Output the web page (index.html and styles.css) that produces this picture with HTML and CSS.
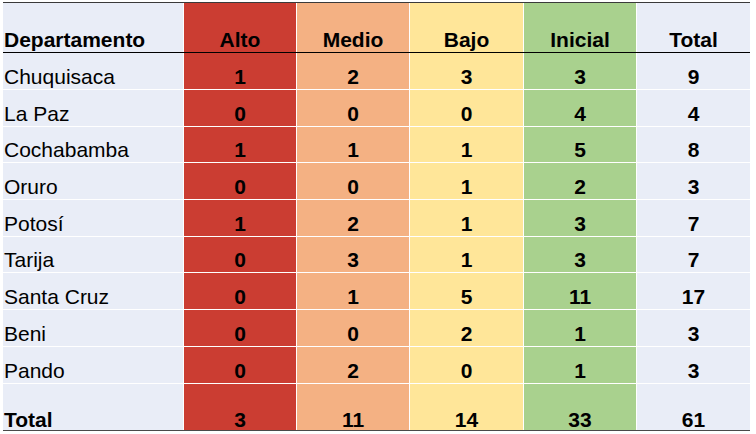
FILE: index.html
```html
<!DOCTYPE html>
<html lang="es">
<head>
<meta charset="utf-8">
<title>Departamentos</title>
<link rel="stylesheet" href="styles.css">
</head>
<body>
<div class="table">
  <div class="row head">
    <div class="c name">Departamento</div>
    <div class="c alto">Alto</div>
    <div class="c medio">Medio</div>
    <div class="c bajo">Bajo</div>
    <div class="c ini">Inicial</div>
    <div class="c tot">Total</div>
  </div>
  <div class="body">
    <div class="row first"><div class="c name reg">Chuquisaca</div><div class="c alto">1</div><div class="c medio">2</div><div class="c bajo">3</div><div class="c ini">3</div><div class="c tot">9</div></div>
    <div class="row"><div class="c name reg">La Paz</div><div class="c alto">0</div><div class="c medio">0</div><div class="c bajo">0</div><div class="c ini">4</div><div class="c tot">4</div></div>
    <div class="row"><div class="c name reg">Cochabamba</div><div class="c alto">1</div><div class="c medio">1</div><div class="c bajo">1</div><div class="c ini">5</div><div class="c tot">8</div></div>
    <div class="row"><div class="c name reg">Oruro</div><div class="c alto">0</div><div class="c medio">0</div><div class="c bajo">1</div><div class="c ini">2</div><div class="c tot">3</div></div>
    <div class="row"><div class="c name reg">Potosí</div><div class="c alto">1</div><div class="c medio">2</div><div class="c bajo">1</div><div class="c ini">3</div><div class="c tot">7</div></div>
    <div class="row"><div class="c name reg">Tarija</div><div class="c alto">0</div><div class="c medio">3</div><div class="c bajo">1</div><div class="c ini">3</div><div class="c tot">7</div></div>
    <div class="row"><div class="c name reg">Santa Cruz</div><div class="c alto">0</div><div class="c medio">1</div><div class="c bajo">5</div><div class="c ini">11</div><div class="c tot">17</div></div>
    <div class="row"><div class="c name reg">Beni</div><div class="c alto">0</div><div class="c medio">0</div><div class="c bajo">2</div><div class="c ini">1</div><div class="c tot">3</div></div>
    <div class="row"><div class="c name reg">Pando</div><div class="c alto">0</div><div class="c medio">2</div><div class="c bajo">0</div><div class="c ini">1</div><div class="c tot">3</div></div>
    <div class="row total"><div class="c name">Total</div><div class="c alto">3</div><div class="c medio">11</div><div class="c bajo">14</div><div class="c ini">33</div><div class="c tot">61</div></div>
  </div>
</div>
</body>
</html>
```

FILE: styles.css
```css
html, body {
  margin: 0;
  padding: 0;
  background: #ffffff;
}
body {
  padding: 2px 0 0 3px;
  font-family: "Liberation Sans", Arial, sans-serif;
  font-size: 21px;
  line-height: 21px;
  color: #000;
}
.table {
  width: 747px;
  border-top: 1px solid #3a3a3a;
  border-bottom: 1px solid #4a4a4a;
  background: #ffffff;
}
.row {
  display: grid;
  grid-template-columns: 180px 112px 112px 113px 112px 113px;
  column-gap: 1px;
  height: 35.7px;
}
.head {
  height: 49px;
  border-bottom: 1px solid #000;
}
.body {
  display: flex;
  flex-direction: column;
  row-gap: 1px;
}
.row.first {
  height: 36px;
}
.row.total {
  height: 46.3px;
}
.c {
  display: flex;
  align-items: flex-end;
  justify-content: center;
  padding-bottom: 2px;
  font-weight: bold;
  white-space: nowrap;
}
.total .c {
  padding-bottom: 0;
}
.c.name {
  justify-content: flex-start;
  padding-left: 1px;
  background: #e9edf7;
}
.c.reg {
  font-weight: normal;
}
.alto { background: #cb3d32; }
.medio { background: #f4b183; }
.bajo { background: #ffe699; }
.ini { background: #a9d18e; }
.tot { background: #e9edf7; }
```
